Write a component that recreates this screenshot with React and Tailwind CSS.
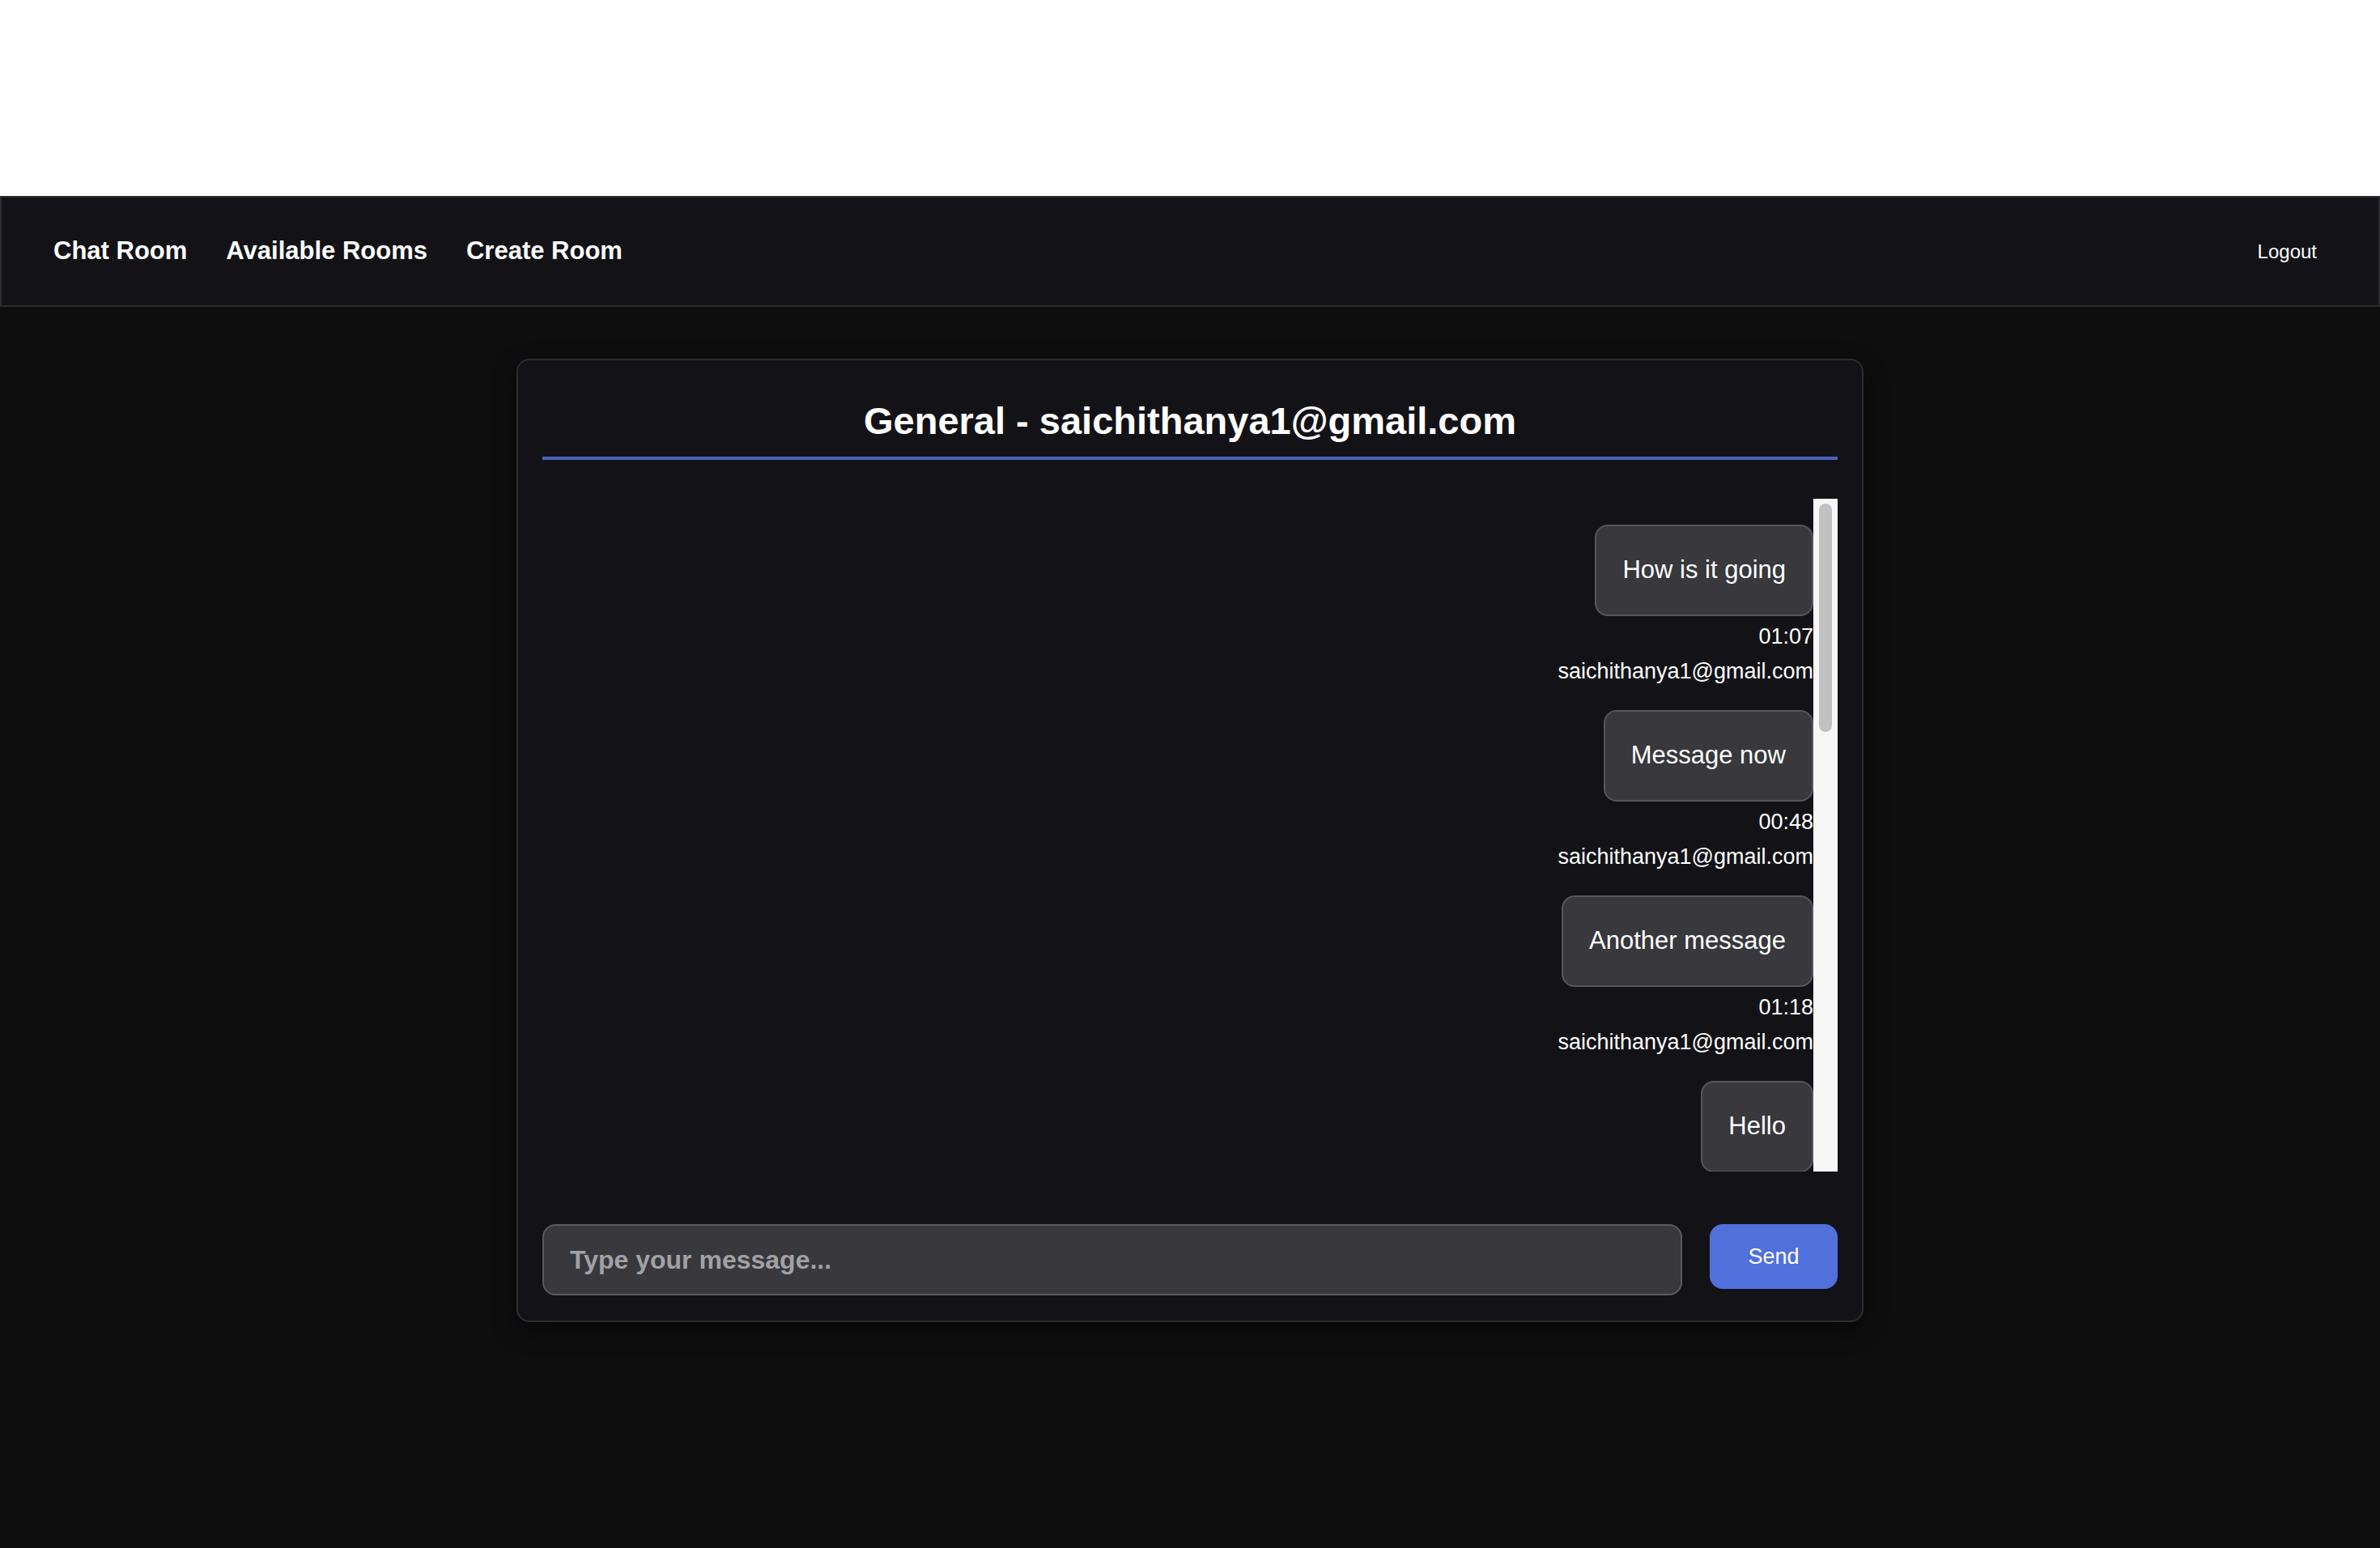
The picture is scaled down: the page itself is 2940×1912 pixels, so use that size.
import React from "react";

const messages = [
  { text: "How is it going", time: "01:07", user: "saichithanya1@gmail.com" },
  { text: "Message now", time: "00:48", user: "saichithanya1@gmail.com" },
  { text: "Another message", time: "01:18", user: "saichithanya1@gmail.com" },
  { text: "Hello" },
];

const Navbar = () => (
  <nav className="h-[137px] border-2 border-[#2c2c30] bg-[#131317] flex items-center justify-between pl-[64px] pr-[64px]">
    <div className="flex items-center gap-[48px] text-[31px] font-bold text-white">
      <a>Chat Room</a>
      <a>Available Rooms</a>
      <a>Create Room</a>
    </div>
    <button className="text-[24px] text-white px-[12px]">Logout</button>
  </nav>
);

const MessageItem = ({ msg }) => (
  <div className="flex flex-col items-end mb-[33px] shrink-0">
    <div className="h-[113px] flex items-center px-[32px] border-2 border-[#56565b] bg-[#38383d] rounded-[16px] text-[31px] text-white">
      {msg.text}
    </div>
    {msg.time && (
      <div className="mt-[10px] text-[27px] leading-[30px] text-white">{msg.time}</div>
    )}
    {msg.user && (
      <div className="mt-[13px] text-[27px] leading-[30px] text-white">{msg.user}</div>
    )}
  </div>
);

export default function App() {
  return (
    <div className="h-[1912px] flex flex-col bg-white font-['Liberation_Sans',Arial,sans-serif]">
      <div className="h-[242px] bg-white" />
      <Navbar />
      <main className="flex-1 bg-[#0e0e0e] pt-[64px]">
        <div className="w-[1664px] mx-auto border-2 border-[#2e2e32] rounded-[16px] bg-[#131317] px-[30px] pt-[30px] pb-[31px] shadow-[0_10px_30px_rgba(0,0,0,0.45)]">
          <h2 className="mt-[17px] pb-[16px] border-b-4 border-[#4a63bd] text-center text-[47px] leading-[56px] font-bold text-white">
            General - saichithanya1@gmail.com
          </h2>

          <div className="mt-[48px] h-[831px] flex">
            <div className="flex-1 overflow-hidden pt-[32px] flex flex-col items-end">
              {messages.map((m, i) => (
                <MessageItem key={i} msg={m} />
              ))}
            </div>
            <div className="w-[30px] bg-[#f6f6f6] pt-[6px] flex justify-center">
              <div className="w-[16px] h-[282px] rounded-full bg-[#c1c1c1]" />
            </div>
          </div>

          <div className="mt-[65px] flex items-start gap-[34px]">
            <input
              type="text"
              placeholder="Type your message..."
              className="flex-1 h-[88px] px-[32px] border-2 border-[#5a5a5f] bg-[#38383d] rounded-[16px] text-[32px] font-bold text-white placeholder:text-[#a1a1a6] outline-none"
            />
            <button className="w-[158px] h-[80px] bg-[#5070dc] rounded-[16px] text-[27px] text-white">
              Send
            </button>
          </div>
        </div>
      </main>
    </div>
  );
}
